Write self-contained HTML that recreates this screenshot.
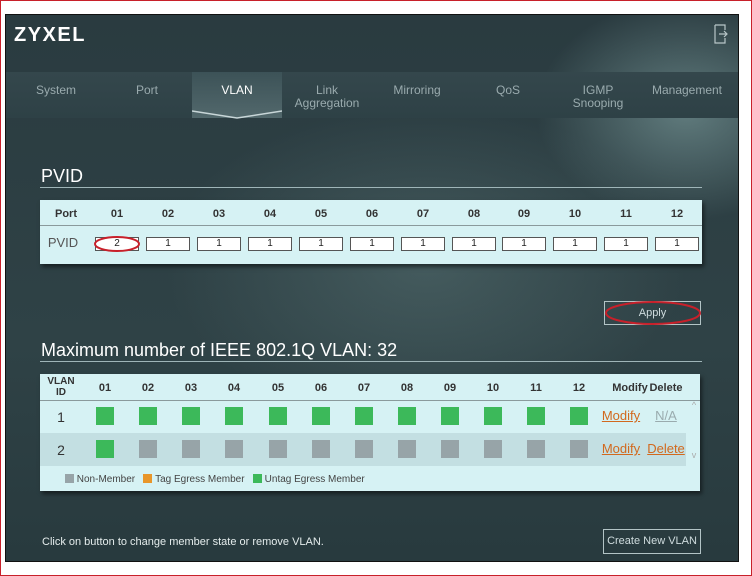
<!DOCTYPE html>
<html><head><meta charset="utf-8"><style>
*{margin:0;padding:0;box-sizing:border-box}
body{width:752px;height:576px;background:#fff;position:relative;overflow:hidden;font-family:"Liberation Sans",sans-serif;border:1px solid #c8202a}
#d{position:absolute;left:4px;top:13px;width:734px;height:548px;background:radial-gradient(ellipse 150px 110px at 680px 95px,rgba(140,175,175,.55),rgba(0,0,0,0)),radial-gradient(ellipse 260px 160px at 420px 250px,rgba(110,140,140,.35),rgba(0,0,0,0)),linear-gradient(#2a3b40,#2f4246 60%,#283a3e);border:1px solid #111}
.a{position:absolute}
.logo{left:8px;top:9px;color:#fff;font-weight:bold;font-size:20px;letter-spacing:1.5px}
.tabs{left:0;top:57px;width:732px;height:46px;background:linear-gradient(#34474c,#2e4146)}
.tab{position:absolute;top:12px;color:#9aabae;font-size:12px;text-align:center;line-height:13px;transform:translateX(-50%);white-space:nowrap}
.act{left:186px;top:57px;width:90px;height:46px;background:linear-gradient(#3c5257,#52686c)}
h2{position:absolute;color:#fff;font-weight:normal;font-size:18px}
.line{position:absolute;height:1px;background:#9fb5b8}
.tbl{position:absolute;background:#d6f2f4;box-shadow:2px 3px 4px rgba(0,0,0,.5)}
.c{position:absolute;transform:translateX(-50%);font-size:11px;color:#333;text-align:center;white-space:nowrap}
.inp{position:absolute;width:44px;height:14px;border:1px solid #555;background:#fff;font-size:10px;text-align:center;line-height:12px;color:#222}
.sq{position:absolute;width:18px;height:18px}
.g{background:#3cb95a}.n{background:#97a4a8}
.btn{position:absolute;border:1px solid #b3c4c6;color:#cfdcde;font-size:11px;text-align:center}
.lk{color:#d2691e;text-decoration:underline;font-size:13px}
</style></head><body>
<div id="d">
<div class="a logo">ZYXEL</div>
<svg class="a" style="left:708px;top:9px" width="14" height="20"><path d="M1 1h10v5M1 1v18h10v-5" stroke="#b8c6c8" fill="none" stroke-width="1.2"/><path d="M5 10h8M10 7l3 3-3 3" stroke="#b8c6c8" fill="none" stroke-width="1.2"/></svg>
<div class="a tabs"></div>
<div class="a act"></div>
<svg class="a" style="left:186px;top:93px" width="90" height="12"><path d="M0 3L45 10L90 3" stroke="#c8d6d8" stroke-width="1.5" fill="none"/></svg>
<div class="tab" style="left:50px;top:69px">System</div>
<div class="tab" style="left:141px;top:69px">Port</div>
<div class="tab" style="left:231px;top:69px;color:#fff">VLAN</div>
<div class="tab" style="left:321px;top:69px">Link<br>Aggregation</div>
<div class="tab" style="left:411px;top:69px">Mirroring</div>
<div class="tab" style="left:502px;top:69px">QoS</div>
<div class="tab" style="left:592px;top:69px">IGMP<br>Snooping</div>
<div class="tab" style="left:681px;top:69px">Management</div>

<h2 style="left:35px;top:151px">PVID</h2>
<div class="line" style="left:34px;top:172px;width:662px"></div>
<div class="tbl" style="left:34px;top:185px;width:662px;height:64px">
<div class="a" style="left:0;top:25px;width:662px;height:1px;background:#8a9a9c"></div>
<div class="c" style="left:26px;top:8px;font-weight:bold">Port</div>
<div class="c" style="left:23px;top:35px;font-size:13px;color:#555">PVID</div>
</div>
<h2 style="left:35px;top:325px">Maximum number of IEEE 802.1Q VLAN: 32</h2>
<div class="line" style="left:34px;top:346px;width:662px"></div>
<div class="btn" style="left:598px;top:286px;width:97px;height:24px;line-height:22px">Apply</div>
<svg class="a" style="left:598px;top:284px" width="100" height="28"><ellipse cx="49" cy="14" rx="47" ry="11" stroke="#c8202a" stroke-width="2" fill="none"/></svg>

<div class="tbl" style="left:34px;top:359px;width:660px;height:117px">
<div class="a" style="left:0;top:26px;width:660px;height:1px;background:#8a9a9c"></div>
<div class="a" style="left:0;top:59px;width:646px;height:33px;background:#c3dfe2"></div>
<div class="c" style="left:21px;top:2px;font-weight:bold;font-size:10px;line-height:11px">VLAN<br>ID</div>
<div class="c" style="left:21px;top:35px;font-size:14px">1</div>
<div class="c" style="left:21px;top:68px;font-size:14px">2</div>
<div class="c" style="left:590px;top:8px;font-weight:bold">Modify</div>
<div class="c" style="left:626px;top:8px;font-weight:bold">Delete</div>
<div class="c lk" style="left:581px;top:34px">Modify</div>
<div class="c" style="left:626px;top:34px;font-size:13px;color:#9aabae;text-decoration:underline">N/A</div>
<div class="c lk" style="left:581px;top:67px">Modify</div>
<div class="c lk" style="left:626px;top:67px">Delete</div>
<div class="a" style="left:25px;top:100px;font-size:10px;color:#444"><span style="display:inline-block;width:9px;height:9px;background:#97a4a8;vertical-align:-1px"></span> Non-Member &nbsp; <span style="display:inline-block;width:9px;height:9px;background:#e8962a;vertical-align:-1px"></span> Tag Egress Member &nbsp; <span style="display:inline-block;width:9px;height:9px;background:#3cb95a;vertical-align:-1px"></span> Untag Egress Member</div>
<div class="c" style="left:654px;top:26px;font-size:9px;color:#aaa">^</div>
<div class="c" style="left:654px;top:76px;font-size:9px;color:#aaa">v</div>
</div>

<div class="a" style="left:36px;top:521px;color:#e4ecec;font-size:11px">Click on button to change member state or remove VLAN.</div>
<div class="btn" style="left:597px;top:514px;width:98px;height:25px;line-height:23px">Create New VLAN</div>
</div>
<script>
var d=document.getElementById('d'),h='';
var px=[117,168,219,270,321,372,423,474,524,575,626,677];
px.forEach(function(x,i){x-=6;var t=(i<9?'0':'')+(i+1);
h+='<div class="c" style="left:'+x+'px;top:193px;font-weight:bold">'+t+'</div>';
h+='<div class="inp" style="left:'+(x-22)+'px;top:222px">'+(i?1:2)+'</div>';});
h+='<svg class="a" style="left:87px;top:218px" width="50" height="22"><ellipse cx="24" cy="11" rx="22" ry="7" stroke="#c8202a" stroke-width="2" fill="none"/></svg>';
var vx=[105,148,191,234,278,321,364,407,450,493,536,579];
vx.forEach(function(x,i){x-=6;var t=(i<9?'0':'')+(i+1);
h+='<div class="c" style="left:'+x+'px;top:367px;font-weight:bold">'+t+'</div>';
h+='<div class="sq g" style="left:'+(x-9)+'px;top:392px"></div>';
h+='<div class="sq '+(i?'n':'g')+'" style="left:'+(x-9)+'px;top:425px"></div>';});
d.insertAdjacentHTML('beforeend',h);
</script>
</body></html>
